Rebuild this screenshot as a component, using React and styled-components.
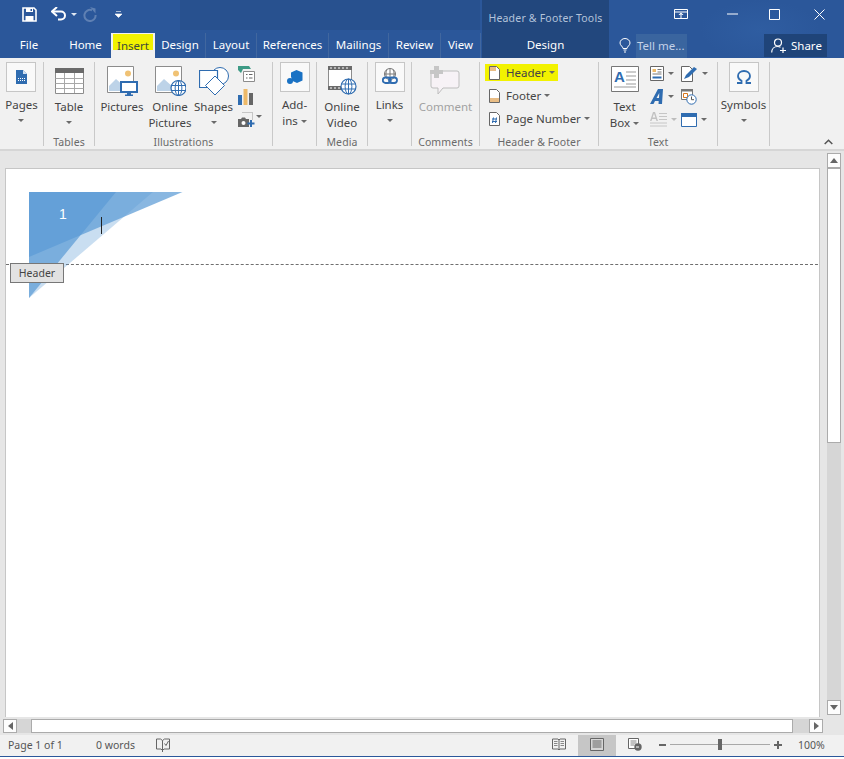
import React from "react"
import styled, { createGlobalStyle } from "styled-components"

const GlobalStyle = createGlobalStyle`
  html, body {
    margin: 0;
    padding: 0;
    height: 100%;
    background: white;
    overflow: hidden;
    font-family: "Noto Sans", "Open Sans", sans-serif;
  }
  * { box-sizing: border-box; }
  svg { display: block; flex: none; }
`

const blue = "#2b579a"
const iconBlue = "#2f6cb0"
const grey = "#6a6a6a"

const Window = styled.div`
  width: 844px;
  height: 759px;
  display: flex;
  flex-direction: column;
  background: white;
`

const TopBand = styled.div`
  height: 58px;
  display: grid;
  grid-template-columns: 482px 127px 1fr;
  color: white;
  background-color: ${blue};
  background-image:
    linear-gradient(#28518f, #28518f 30px, transparent 30px),
    radial-gradient(ellipse 60px 30px at 760px 30px, #2f5da1, transparent);
  background-size: 300px 100%, 100% 100%;
  background-position: 180px 0, 0 0;
  background-repeat: no-repeat;
`

const TopColumn = styled.div`
  display: flex;
  flex-direction: column;
  min-width: 0;
`

const TitleRow = styled.div`
  height: 33px;
  display: flex;
  align-items: center;
`

const TabRow = styled.div`
  height: 25px;
  display: flex;
  align-items: stretch;
  font-size: 11.5px;
`

const Qat = styled(TitleRow)`
  padding-left: 22px;
  padding-bottom: 5px;
`

const QatItem = styled.div`
  margin-left: ${p => p.$ml}px;
  display: flex;
  align-items: center;
`

const QatCaret = styled.div`
  width: 0;
  height: 0;
  border: 3px solid transparent;
  border-top: 3px solid #dfe7f2;
  border-bottom: 0;
  margin: 1px 0 0 4px;
`

const Tab = styled.div`
  width: ${p => p.$w}px;
  margin-left: ${p => p.$ml || 0}px;
  display: flex;
  align-items: center;
  justify-content: center;
  padding-bottom: 2px;
  white-space: nowrap;
  background: ${p => (p.$active ? "#f1f1f1" : "transparent")};
  color: ${p => (p.$active ? "#2b579a" : "white")};
  border-right: ${p => (p.$line ? "1px solid #41679f" : "0")};
`

const Marker = styled.span`
  align-self: flex-start;
  background: #f2f200;
  color: #3d4a3a;
  height: 16px;
  line-height: 23px;
  padding: 0 4px;
  margin-top: 1px;
`

const ContextColumn = styled(TopColumn)`
  background: #22477d;
  align-items: center;
`

const ContextTitle = styled(TitleRow)`
  font-size: 10.5px;
  letter-spacing: 0.2px;
  color: #b4c3da;
  padding-top: 3px;
`

const WindowButtons = styled(TitleRow)`
  padding: 0 0 5px 59px;
`

const WinButton = styled.div`
  width: ${p => p.$w}px;
  margin-left: ${p => p.$ml || 0}px;
  display: flex;
  justify-content: center;
`

const RightTabs = styled(TabRow)`
  align-items: center;
  padding-left: 10px;
  color: #c4d2e8;
`

const TellBox = styled.div`
  width: 51px;
  height: 24px;
  margin-left: 5px;
  padding-left: 1px;
  background: #3a659f;
  line-height: 23px;
  white-space: nowrap;
`

const ShareBox = styled.div`
  width: 63px;
  height: 23px;
  margin-left: 77px;
  background: #1f4479;
  color: white;
  display: flex;
  align-items: center;
  gap: 5px;
  padding-left: 7px;
`

const Ribbon = styled.div`
  height: 93px;
  padding-top: 4px;
  display: flex;
  background: #f1f1f1;
  border-bottom: 2px solid #d6d6d6;
  position: relative;
  font-size: 11.5px;
  color: #444;
`

const Group = styled.div`
  width: ${p => p.$w}px;
  height: 84px;
  border-right: 1px solid #c9c9c9;
  display: flex;
  flex-direction: column;
`

const GroupBody = styled.div`
  height: 74px;
  flex: none;
  display: flex;
  justify-content: ${p => p.$justify || "center"};
  padding-left: ${p => p.$pl || 0}px;
`

const GroupLabel = styled.div`
  font-size: 10.5px;
  line-height: 13px;
  flex: none;
  text-align: center;
  color: ${grey};
  letter-spacing: 0.1px;
`

const BigButton = styled.div`
  width: ${p => (p.$w ? `${p.$w}px` : "auto")};
  display: flex;
  flex-direction: column;
  align-items: center;
  line-height: 16px;
  white-space: nowrap;
  color: ${p => (p.$off ? "#a2a2a2" : "#444")};
`

const IconBox = styled.div`
  width: 30px;
  height: 30px;
  margin-bottom: 5px;
  display: flex;
  align-items: center;
  justify-content: center;
  background: #f9f9f9;
  border: 1px solid #c6c6c6;
`

const IconSlot = styled.div`
  height: 37px;
  display: flex;
  align-items: center;
  justify-content: center;
  padding-bottom: ${p => p.$pb || 0}px;
`

const Line = styled.div`
  display: flex;
  align-items: center;
  gap: 3px;
`

const Caret = styled.div`
  width: 0;
  height: 0;
  border-left: 3px solid transparent;
  border-right: 3px solid transparent;
  border-top: 3px solid ${p => p.$light ? "#bdbdbd" : grey};
  margin-top: ${p => p.$mt || 0}px;
`

const CaretLine = styled.div`
  height: 15px;
  display: flex;
  align-items: center;
  justify-content: center;
`

const SmallColumn = styled.div`
  display: flex;
  flex-direction: column;
  padding-left: 5px;
  width: 37px;
`

const SmallItem = styled.div`
  height: 23px;
  display: flex;
  align-items: center;
  gap: 1px;
`

const MenuColumn = styled.div`
  display: flex;
  flex-direction: column;
  align-items: flex-start;
  margin-top: -1px;
  padding-left: 5px;
  width: 100%;
`

const MenuRow = styled.div`
  height: 23px;
  display: flex;
  align-items: center;
`

const MenuInner = styled.div`
  height: 17px;
  display: flex;
  align-items: center;
  gap: 6px;
  padding: 0 3px 0 4px;
  background: ${p => (p.$mark ? "#f2f200" : "transparent")};
  white-space: nowrap;
`

const TextGrid = styled.div`
  display: grid;
  grid-template-columns: 31px 30px;
  grid-auto-rows: 23px;
`

const GridItem = styled.div`
  display: flex;
  align-items: center;
  gap: 4px;
`

const Collapse = styled.div`
  position: absolute;
  right: 11px;
  bottom: 4px;
`

const DocRow = styled.div`
  height: 566px;
  display: flex;
  background: #e6e6e6;
`

const DocArea = styled.div`
  flex: 1;
  padding: 17px 7px 0 5px;
  min-width: 0;
`

const Page = styled.div`
  height: 100%;
  background: white;
  border: 1px solid #c6c6c6;
  border-bottom: 0;
  position: relative;
`

const HeaderZone = styled.div`
  height: 96px;
  border-bottom: 1px dashed #6f6f6f;
  margin-right: 1px;
`

const Artwork = styled.svg`
  position: absolute;
  left: 23px;
  top: 23px;
`

const PageNumber = styled.div`
  position: absolute;
  left: 53px;
  top: 36px;
  font-size: 14px;
  line-height: 18px;
  color: white;
  font-family: "Liberation Sans", sans-serif;
`

const TextCursor = styled.div`
  position: absolute;
  left: 95px;
  top: 48px;
  width: 1px;
  height: 17px;
  background: #222;
`

const HeaderTag = styled.div`
  position: absolute;
  left: 4px;
  top: 94px;
  width: 54px;
  height: 20px;
  background: #e2e2e2;
  border: 1px solid #777;
  font-size: 10.5px;
  line-height: 18px;
  text-align: center;
  color: #444;
`

const VScroll = styled.div`
  width: 17px;
  padding: 2px 3px 2px 0;
  display: flex;
  flex-direction: column;
  background: #e6e6e6;
`

const ScrollButton = styled.div`
  width: 14px;
  height: ${p => p.$h || 15}px;
  flex: none;
  background: #fdfdfd;
  border: 1px solid #ababab;
  display: flex;
  align-items: center;
  justify-content: center;
`

const VTrack = styled.div`
  flex: 1;
  background: #d6d6d6;
  display: flex;
  flex-direction: column;
`

const VThumb = styled.div`
  height: 275px;
  background: white;
  border: 1px solid #ababab;
`

const HScroll = styled.div`
  height: 18px;
  display: flex;
  align-items: center;
  padding: 0 21px 0 3px;
  background: #e6e6e6;
`

const HTrack = styled.div`
  flex: 1;
  height: 14px;
  background: #d6d6d6;
  padding: 0 16px 0 14px;
`

const HThumb = styled.div`
  height: 100%;
  background: white;
  border: 1px solid #ababab;
`

const Arrow = styled.div`
  width: 0;
  height: 0;
  border: 4px solid transparent;
  ${p => p.$dir === "up" && "border-bottom: 5px solid #666; border-top: 0;"}
  ${p => p.$dir === "down" && "border-top: 5px solid #666; border-bottom: 0;"}
  ${p => p.$dir === "left" && "border-right: 5px solid #666; border-left: 0;"}
  ${p => p.$dir === "right" && "border-left: 5px solid #666; border-right: 0;"}
`

const StatusBar = styled.div`
  height: 22px;
  display: flex;
  align-items: stretch;
  background: #f1f1f1;
  border-bottom: 1px solid ${blue};
  font-size: 10.5px;
  color: #555;
`

const StatusText = styled.div`
  width: ${p => p.$w}px;
  margin-left: ${p => p.$ml || 0}px;
  padding-bottom: 2px;
  display: flex;
  align-items: center;
  white-space: nowrap;
`

const StatusView = styled.div`
  width: ${p => p.$w}px;
  margin-left: ${p => p.$ml || 0}px;
  padding-bottom: 2px;
  display: flex;
  align-items: center;
  justify-content: center;
  background: ${p => (p.$active ? "#c6c6c6" : "transparent")};
`

const Zoom = styled.div`
  width: 137px;
  margin-left: 17px;
  padding-bottom: 2px;
  display: flex;
  align-items: center;
  gap: 4px;
`

const ZoomSign = styled.div`
  width: ${p => p.$w}px;
  height: 2px;
  background: #666;
  position: relative;
  ${p => p.$plus && "&::after { content: ''; position: absolute; left: 3px; top: -3px; width: 2px; height: 8px; background: #666; }"}
`

const ZoomTrack = styled.div`
  width: 100px;
  height: 1px;
  background: #a8a8a8;
  position: relative;
`

const ZoomThumb = styled.div`
  position: absolute;
  left: 48px;
  top: -5px;
  width: 4px;
  height: 11px;
  background: #666;
`

const SaveIcon = () => (
  <svg width="15" height="15" viewBox="0 0 15 15">
    <path d="M1 1h11l2 2v11H1z" fill="none" stroke="#fff" strokeWidth="1.6" />
    <path d="M4 1h7v4H4zM3.500 9h8v5h-8z" fill="#fff" />
    <path d="M8.500 2h1.500v2H8.500z" fill={blue} />
  </svg>
)

const UndoIcon = ({ color }) => (
  <svg width="16" height="14" viewBox="0 0 16 14">
    <path d="M1.500 5.500H10a4 4 0 0 1 0 8H7" fill="none" stroke={color} strokeWidth="2" transform="translate(0 -1)" />
    <path d="M6 0L1 4.500L6 9" fill="none" stroke={color} strokeWidth="2" />
  </svg>
)

const RedoIcon = () => (
  <svg width="14" height="15" viewBox="0 0 14 15">
    <path d="M9 3.200A5.600 5.600 0 1 0 12.600 8" fill="none" stroke="#5f80b3" strokeWidth="2" />
    <path d="M7 0l5.500 1.500V6.500z" fill="#5f80b3" />
  </svg>
)

const CustomizeIcon = () => (
  <svg width="7" height="7" viewBox="0 0 7 7">
    <path d="M1 0.500h5M0 3h7L3.500 6.500z" fill="#fff" stroke="#fff" strokeWidth="0.6" />
  </svg>
)

const RibbonDisplayIcon = () => (
  <svg width="14" height="10" viewBox="0 0 14 10">
    <path d="M.5.5h13v9H.5zM.5 3h13" fill="none" stroke="#fff" />
    <path d="M7 3.500L4.500 6h5zM6.500 5.500h1V9h-1z" fill="#fff" />
  </svg>
)

const MinIcon = () => <svg width="11" height="2" viewBox="0 0 11 2"><path d="M0 1h11" stroke="#fff" /></svg>
const MaxIcon = () => <svg width="11" height="11" viewBox="0 0 11 11"><path d="M.5.5h10v10H.5z" fill="none" stroke="#fff" /></svg>
const CloseIcon = () => <svg width="11" height="11" viewBox="0 0 11 11"><path d="M.5.5l10 10M10.500.5l-10 10" stroke="#fff" /></svg>

const BulbIcon = () => (
  <svg width="12" height="15" viewBox="0 0 12 15">
    <path d="M4 10.500C4 8.500 1 7.500 1 5a5 4.500 0 0 1 10 0c0 2.500-3 3.500-3 5.500z" fill="none" stroke="#fff" />
    <path d="M4.500 12h3M5 14h2" stroke="#fff" />
  </svg>
)

const ShareIcon = () => (
  <svg width="15" height="15" viewBox="0 0 15 15">
    <circle cx="7" cy="4.500" r="3.500" fill="none" stroke="#fff" strokeWidth="1.2" />
    <path d="M.7 14.500c0-3.500 2.500-6 6-6 1.200 0 2 .3 2.800.8" fill="none" stroke="#fff" strokeWidth="1.2" />
    <path d="M9 12.500h6M12 9.500v5.500" stroke="#fff" strokeWidth="1.2" />
  </svg>
)

const PagesIcon = () => (
  <svg width="11" height="14" viewBox="0 0 11 14">
    <path d="M0 0h7l4 4v10H0z" fill={iconBlue} />
    <path d="M7 0v4h4z" fill="#cfe0f2" />
    <path d="M2 8.500h7M2 10.500h7" stroke="#fff" strokeDasharray="1 1" />
  </svg>
)

const TableIcon = () => (
  <svg width="29" height="26" viewBox="0 0 29 26">
    <path d="M.5 .5h28v25H.5z" fill="#fff" stroke="#8c8c8c" />
    <path d="M0 0h29v5H0z" fill="#6a6a6a" />
    <path d="M.5 10.500h28M.5 15.500h28M.5 20.500h28M9.500 5v20M19.500 5v20" stroke="#a8a8a8" />
  </svg>
)

const PictureBase = ({ children }) => (
  <svg width="31" height="30" viewBox="0 0 31 30">
    <path d="M.5 .5h26v26H.5z" fill="#fff" stroke="#8c8c8c" />
    <circle cx="21" cy="7.500" r="3" fill="#f0c274" />
    <path d="M2 25V20L9 13l9 8v4z" fill="#bdd3e8" />
    {children}
  </svg>
)

const PicturesIcon = () => (
  <PictureBase>
    <path d="M14 16h16v10H14z" fill="#fff" stroke={iconBlue} strokeWidth="2" />
    <path d="M20 27h4v1.500h2V30h-8v-1.500h2z" fill={iconBlue} />
  </PictureBase>
)

const GlobeLines = ({ cx, cy, r }) => (
  <g fill="none" stroke={iconBlue}>
    <circle cx={cx} cy={cy} r={r} fill="#fff" strokeWidth="1.2" />
    <ellipse cx={cx} cy={cy} rx={r * 0.45} ry={r} />
    <path d={`M${cx - r} ${cy - 2.500}h${2 * r}M${cx - r} ${cy + 2.500}h${2 * r}M${cx} ${cy - r}v${2 * r}`} />
  </g>
)

const OnlinePicturesIcon = () => (
  <PictureBase>
    <GlobeLines cx={23.500} cy={22} r={7.500} />
  </PictureBase>
)

const ShapesIcon = () => (
  <svg width="30" height="30" viewBox="0 0 30 30">
    <circle cx="21" cy="10" r="8.500" fill="#fff" stroke={iconBlue} />
    <path d="M.5 4.500h18v17H.5z" fill="#fff" stroke={iconBlue} strokeWidth="1.200" />
    <path d="M16 10l9.500 9.500L16 29 6.500 19.500z" fill="#fff" stroke={iconBlue} />
  </svg>
)

const SmartArtIcon = () => (
  <svg width="17" height="16" viewBox="0 0 17 16">
    <path d="M0 0h11l2 3H5L3 7 0 4z" fill="#3e9b86" />
    <path d="M5.500 5.500h11v10h-11z" fill="#fff" stroke="#8c8c8c" />
    <path d="M8 8.500h1.500M11 8.500h3.500M8 12h1.500M11 12h3.500" stroke="#666" />
  </svg>
)

const ChartIcon = () => (
  <svg width="15" height="16" viewBox="0 0 15 16">
    <path d="M0 6h4v10H0z" fill={iconBlue} />
    <path d="M5.500 0h4v16h-4z" fill="#edb968" />
    <path d="M11 4h4v12h-4z" fill="#666" />
  </svg>
)

const ScreenshotIcon = () => (
  <svg width="17" height="16" viewBox="0 0 17 16">
    <path d="M4.500 .5h10v7" fill="none" stroke="#999" strokeDasharray="1 1" />
    <path d="M0 7h3l1-1.500h3L8 7h3v8H0z" fill="#666" />
    <circle cx="5.500" cy="11" r="2" fill="#fff" />
    <path d="M9.500 11.500h7M13 8v7" stroke={iconBlue} strokeWidth="2" />
  </svg>
)

const AddinsIcon = () => (
  <svg width="16" height="15" viewBox="0 0 16 15">
    <path d="M9.500 0l6 2.500v8L10 13l-5.500-2.500V8a3.500 3.500 0 0 0-.5-1V2.500z" fill="#1a72c4" />
    <circle cx="3" cy="11" r="3" fill="#1a72c4" />
  </svg>
)

const VideoIcon = () => (
  <svg width="29" height="29" viewBox="0 0 29 29">
    <path d="M.5 .5h23v23H.5z" fill="#fff" stroke="#8c8c8c" />
    <path d="M0 0h24v4H0zM0 20h24v4H0z" fill="#6a6a6a" />
    <path d="M2 2h20M2 22h20" stroke="#fff" strokeDasharray="2 2" />
    <GlobeLines cx={20.500} cy={20.500} r={7.500} />
  </svg>
)

const LinksIcon = () => (
  <svg width="16" height="18" viewBox="0 0 16 18">
    <circle cx="8" cy="6" r="5.500" fill="#fff" stroke="#777" />
    <path d="M2.500 6h11M8 .5v11M5 1.500c-1.500 3-1.500 6 0 9M11 1.500c1.500 3 1.500 6 0 9" fill="none" stroke="#777" />
    <rect x="0.800" y="9.500" width="8" height="5.500" rx="2.700" fill="none" stroke={iconBlue} strokeWidth="1.800" />
    <rect x="7" y="9.500" width="8" height="5.500" rx="2.700" fill="none" stroke={iconBlue} strokeWidth="1.800" />
  </svg>
)

const CommentIcon = () => (
  <svg width="30" height="29" viewBox="0 0 30 29">
    <path d="M3 5h24a2 2 0 0 1 2 2v13a2 2 0 0 1-2 2H13l-5 6v-6H3a2 2 0 0 1-2-2V7a2 2 0 0 1 2-2z" fill="#f7f2f6" stroke="#bdbdbd" />
    <path d="M4 0h5v4h4v4H9v4H4V8H0V4h4z" fill="#c6c6c6" />
  </svg>
)

const PageSmall = ({ children }) => (
  <svg width="11" height="14" viewBox="0 0 11 14">
    <path d="M.5 .5h7l3 3v10H.5z" fill="#fff" stroke="#666" />
    {children}
  </svg>
)

const TextBoxIcon = () => (
  <svg width="28" height="26" viewBox="0 0 28 26">
    <path d="M.5 .5h27v25H.5z" fill="#fff" stroke="#777" />
    <text x="3" y="16" fontSize="15" fontWeight="700" fill={iconBlue} fontFamily="Liberation Sans">A</text>
    <path d="M15 6h10M15 10h10M15 14h10M15 18h10M3 21h22" stroke="#999" />
  </svg>
)

const QuickPartsIcon = () => (
  <svg width="14" height="15" viewBox="0 0 14 15">
    <path d="M.5 .5h13v14H.5z" fill="#fff" stroke="#666" />
    <path d="M2.500 3h3.500v3H2.500z" fill="#edb968" />
    <path d="M7.500 3.500h4M7.500 6h4M2.500 8h9" stroke="#777" />
    <path d="M2.500 10.500h9v2h-9z" fill={iconBlue} />
  </svg>
)

const WordArtIcon = () => (
  <svg width="14" height="16" viewBox="0 0 14 16">
    <path d="M0 15L8 0h5l-1 15H8.500l.2-3H5l-1.500 3zM6.500 9h2.500l.3-5z" fill={iconBlue} />
  </svg>
)

const DropCapIcon = () => (
  <svg width="17" height="16" viewBox="0 0 17 16">
    <path d="M0 9L3 0h2l3 9H6.500l-.7-2H2.200L1.500 9zM2.600 5.500h2.800L4 1.500z" fill="#c2c2c2" />
    <path d="M9 1.500h8M9 4.500h8M9 7.500h8M0 11h17M0 14h17" stroke="#c6c6c6" />
  </svg>
)

const SignatureIcon = () => (
  <svg width="17" height="16" viewBox="0 0 17 16">
    <path d="M.5 .5h8l3 3v12H.5z" fill="#fff" stroke="#666" />
    <path d="M3 13l2-4 8-8 3 2-8 8z" fill={iconBlue} />
  </svg>
)

const DateIcon = () => (
  <svg width="16" height="16" viewBox="0 0 16 16">
    <path d="M.5 .5h11v10H.5z" fill="#fff" stroke="#777" />
    <path d="M0 0h12v2.500H0z" fill="#777" />
    <path d="M2.500 4.500h4v4h-4z" fill="#fff" stroke="#d9761c" />
    <circle cx="10.500" cy="10.500" r="4.700" fill="#fff" stroke={iconBlue} />
    <path d="M10.500 7.500v3.200h2.500" fill="none" stroke="#555" />
  </svg>
)

const ObjectIcon = () => (
  <svg width="16" height="14" viewBox="0 0 16 14">
    <path d="M.5 .5h15v13H.5z" fill="#fff" stroke={iconBlue} />
    <path d="M0 0h16v4H0z" fill={iconBlue} />
  </svg>
)

const OmegaIcon = () => (
  <svg width="16" height="14" viewBox="0 0 16 14">
    <path d="M1 13h4.500v-2.200C3 9.500 2 7.800 2 6c0-3 2.500-5 6-5s6 2 6 5c0 1.800-1 3.500-3.500 4.800V13H15" fill="none" stroke={iconBlue} strokeWidth="1.800" />
  </svg>
)

const ReadIcon = () => (
  <svg width="14" height="13" viewBox="0 0 14 13">
    <path d="M.5 1h5.500l1 1 1-1h5.500v10H8l-1 1-1-1H.5zM7 2v9" fill="none" stroke="#666" />
    <path d="M2 3.500h3.500M2 5.500h3.500M2 7.500h3.500M8.500 3.500H12M8.500 5.500H12M8.500 7.500H12" stroke="#888" />
  </svg>
)

const PrintIcon = () => (
  <svg width="14" height="13" viewBox="0 0 14 13">
    <path d="M.5 .5h13v12H.5z" fill="#d6d6d6" stroke="#666" />
    <path d="M2.500 3h9M2.500 5h9M2.500 7h9M2.500 9h9" stroke="#666" />
  </svg>
)

const WebIcon = () => (
  <svg width="14" height="13" viewBox="0 0 14 13">
    <path d="M.5 .5h10v10H.5z" fill="#fff" stroke="#666" />
    <path d="M2.500 3h6M2.500 5h6M2.500 7h4" stroke="#888" />
    <circle cx="10" cy="9" r="3.700" fill="#666" />
    <path d="M8 9h3" stroke="#fff" />
  </svg>
)

const ProofIcon = () => (
  <svg width="14" height="14" viewBox="0 0 14 14">
    <path d="M6.500 2.500L4.500 1H.5v10H5l1.500 1.500M6.500 2.500V14M6.500 2.500L8.500 1h5v10H8L6.500 12.500" fill="none" stroke="#666" />
    <path d="M8.500 5.500L10 7.500 12.500 3" fill="none" stroke="#666" />
  </svg>
)

const ChevronUp = () => (
  <svg width="9" height="6" viewBox="0 0 9 6">
    <path d="M.7 5l3.800-3.800L8.300 5" fill="none" stroke="#555" strokeWidth="1.500" />
  </svg>
)

const PageArt = () => (
  <Artwork width="160" height="110" viewBox="0 0 160 110">
    <path d="M0 0h124L0 106z" fill="#5b9bd5" fillOpacity="0.33" />
    <path d="M0 0h153.500L0 65z" fill="#5b9bd5" fillOpacity="0.72" />
    <path d="M0 0h87L0 106z" fill="#5b9bd5" fillOpacity="0.72" />
  </Artwork>
)

const tabs = [
  { label: "Design", w: 51 },
  { label: "Layout", w: 51 },
  { label: "References", w: 72 },
  { label: "Mailings", w: 60 },
  { label: "Review", w: 52 },
  { label: "View", w: 40 },
]

const App = () => {
  return (
    <Window>
      <GlobalStyle />
      <TopBand>
        <TopColumn>
          <Qat>
            <SaveIcon />
            <QatItem $ml={14}>
              <UndoIcon color="#fff" />
              <QatCaret />
            </QatItem>
            <QatItem $ml={6}><RedoIcon /></QatItem>
            <QatItem $ml={18}><CustomizeIcon /></QatItem>
          </Qat>
          <TabRow>
            <Tab $w={36} $ml={11}>File</Tab>
            <Tab $w={49} $ml={14}>Home</Tab>
            <Tab $w={44} $ml={1} $active><Marker>Insert</Marker></Tab>
            {tabs.map(t => (
              <Tab key={t.label} $w={t.w} $line>{t.label}</Tab>
            ))}
          </TabRow>
        </TopColumn>
        <ContextColumn>
          <ContextTitle>Header &amp; Footer Tools</ContextTitle>
          <TabRow><Tab $w={80}>Design</Tab></TabRow>
        </ContextColumn>
        <TopColumn>
          <WindowButtons>
            <WinButton $w={28}><RibbonDisplayIcon /></WinButton>
            <WinButton $w={46} $ml={18}><MinIcon /></WinButton>
            <WinButton $w={46}><MaxIcon /></WinButton>
            <WinButton $w={54}><CloseIcon /></WinButton>
          </WindowButtons>
          <RightTabs>
            <BulbIcon />
            <TellBox>Tell me...</TellBox>
            <ShareBox><ShareIcon />Share</ShareBox>
          </RightTabs>
        </TopColumn>
      </TopBand>

      <Ribbon>
        <Group $w={44}>
          <GroupBody>
            <BigButton>
              <IconBox><PagesIcon /></IconBox>
              Pages
              <CaretLine><Caret /></CaretLine>
            </BigButton>
          </GroupBody>
        </Group>
        <Group $w={51}>
          <GroupBody>
            <BigButton>
              <IconSlot><TableIcon /></IconSlot>
              Table
              <CaretLine><Caret /></CaretLine>
            </BigButton>
          </GroupBody>
          <GroupLabel>Tables</GroupLabel>
        </Group>
        <Group $w={178}>
          <GroupBody $justify="flex-start" $pl={3}>
            <BigButton $w={48}>
              <IconSlot><PicturesIcon /></IconSlot>
              Pictures
            </BigButton>
            <BigButton $w={48}>
              <IconSlot><OnlinePicturesIcon /></IconSlot>
              Online
              <div>Pictures</div>
            </BigButton>
            <BigButton $w={39}>
              <IconSlot><ShapesIcon /></IconSlot>
              Shapes
              <CaretLine><Caret /></CaretLine>
            </BigButton>
            <SmallColumn>
              <SmallItem><SmartArtIcon /></SmallItem>
              <SmallItem><ChartIcon /></SmallItem>
              <SmallItem><ScreenshotIcon /><Caret $mt={-6} /></SmallItem>
            </SmallColumn>
          </GroupBody>
          <GroupLabel>Illustrations</GroupLabel>
        </Group>
        <Group $w={44}>
          <GroupBody>
            <BigButton>
              <IconBox><AddinsIcon /></IconBox>
              Add-
              <Line>ins <Caret /></Line>
            </BigButton>
          </GroupBody>
        </Group>
        <Group $w={51}>
          <GroupBody>
            <BigButton>
              <IconSlot><VideoIcon /></IconSlot>
              Online
              <div>Video</div>
            </BigButton>
          </GroupBody>
          <GroupLabel>Media</GroupLabel>
        </Group>
        <Group $w={44}>
          <GroupBody>
            <BigButton>
              <IconBox><LinksIcon /></IconBox>
              Links
              <CaretLine><Caret /></CaretLine>
            </BigButton>
          </GroupBody>
        </Group>
        <Group $w={68}>
          <GroupBody>
            <BigButton $off>
              <IconSlot><CommentIcon /></IconSlot>
              Comment
            </BigButton>
          </GroupBody>
          <GroupLabel>Comments</GroupLabel>
        </Group>
        <Group $w={119}>
          <GroupBody>
            <MenuColumn>
              <MenuRow>
                <MenuInner $mark>
                  <PageSmall><path d="M1 1h6v4H1z" fill="#e9bd85" /></PageSmall>
                  <Line>Header <Caret /></Line>
                </MenuInner>
              </MenuRow>
              <MenuRow>
                <MenuInner>
                  <PageSmall><path d="M1 9h9v4H1z" fill="#e9bd85" /></PageSmall>
                  <Line>Footer <Caret /></Line>
                </MenuInner>
              </MenuRow>
              <MenuRow>
                <MenuInner>
                  <PageSmall><path d="M3 7h5M3 9.500h5M4.500 5.500l-1 5.500M7.500 5.500l-1 5.500" stroke={iconBlue} /></PageSmall>
                  <Line>Page Number <Caret /></Line>
                </MenuInner>
              </MenuRow>
            </MenuColumn>
          </GroupBody>
          <GroupLabel>Header &amp; Footer</GroupLabel>
        </Group>
        <Group $w={119}>
          <GroupBody $justify="flex-start">
            <BigButton $w={51}>
              <IconSlot $pb={3}><TextBoxIcon /></IconSlot>
              Text
              <Line>Box <Caret /></Line>
            </BigButton>
            <TextGrid>
              <GridItem><QuickPartsIcon /><Caret /></GridItem>
              <GridItem><SignatureIcon /><Caret /></GridItem>
              <GridItem><WordArtIcon /><Caret /></GridItem>
              <GridItem><DateIcon /></GridItem>
              <GridItem><DropCapIcon /><Caret $light /></GridItem>
              <GridItem><ObjectIcon /><Caret /></GridItem>
            </TextGrid>
          </GroupBody>
          <GroupLabel>Text</GroupLabel>
        </Group>
        <Group $w={52}>
          <GroupBody>
            <BigButton>
              <IconBox><OmegaIcon /></IconBox>
              Symbols
              <CaretLine><Caret /></CaretLine>
            </BigButton>
          </GroupBody>
        </Group>
        <Collapse><ChevronUp /></Collapse>
      </Ribbon>

      <DocRow>
        <DocArea>
          <Page>
            <HeaderZone />
            <PageArt />
            <PageNumber>1</PageNumber>
            <TextCursor />
            <HeaderTag>Header</HeaderTag>
          </Page>
        </DocArea>
        <VScroll>
          <ScrollButton><Arrow $dir="up" /></ScrollButton>
          <VTrack>
            <VThumb />
          </VTrack>
          <ScrollButton><Arrow $dir="down" /></ScrollButton>
        </VScroll>
      </DocRow>

      <HScroll>
        <ScrollButton $h={14}><Arrow $dir="left" /></ScrollButton>
        <HTrack><HThumb /></HTrack>
        <ScrollButton $h={14}><Arrow $dir="right" /></ScrollButton>
      </HScroll>

      <StatusBar>
        <StatusText $w={88} $ml={8}>Page 1 of 1</StatusText>
        <StatusText $w={60}>0 words</StatusText>
        <StatusView $w={14}><ProofIcon /></StatusView>
        <StatusView $w={14} $ml={382}><ReadIcon /></StatusView>
        <StatusView $w={38} $ml={12} $active><PrintIcon /></StatusView>
        <StatusView $w={14} $ml={12}><WebIcon /></StatusView>
        <Zoom>
          <ZoomSign $w={7} />
          <ZoomTrack><ZoomThumb /></ZoomTrack>
          <ZoomSign $w={8} $plus />
        </Zoom>
        <StatusText $w={30} $ml={2}>100%</StatusText>
      </StatusBar>
    </Window>
  )
}

export default App
